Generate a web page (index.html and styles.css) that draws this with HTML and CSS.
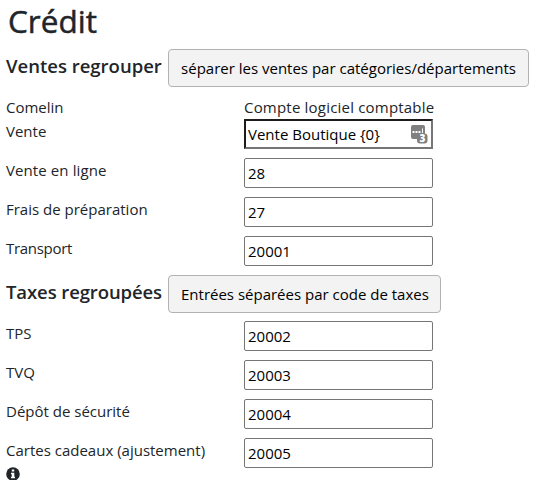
FILE: index.html
```
<!DOCTYPE html>
<html lang="fr">
<head>
    <meta charset="UTF-8">
    <meta name="viewport" content="width=device-width, initial-scale=1.0">
    <title>Crédit</title>
    <link rel="stylesheet" href="styles.css">
</head>
<body>

<div class="container">
    <h1>Crédit</h1>

    <div class="section-header">
        <h2 class="sales-title">Ventes regrouper</h2>
        <button type="button" class="btn-sales">séparer les ventes par catégories/départements</button>
    </div>

    <div class="row row-head">
        <span class="label">Comelin</span>
        <span class="head-account">Compte logiciel comptable</span>
    </div>
    <div class="row">
        <label class="label" for="vente">Vente</label>
        <div class="field">
            <input id="vente" class="active" type="text" value="Vente Boutique {0}">
            <svg class="field-icon" width="17" height="19" viewBox="0 0 17 19">
                <rect x="0" y="0" width="14" height="14" rx="2" fill="#808080"/>
                <path d="M1.5 6h2v2h-2zM4.5 6h2v2h-2zM7.5 6h2v2h-2zM11 3.5h1v4.5h-1z" fill="#fff"/>
                <rect x="6" y="8.5" width="10.5" height="10" rx="3" fill="#808080"/>
                <text x="11.5" y="17.2" text-anchor="middle" class="field-count">3</text>
            </svg>
        </div>
    </div>
    <div class="row">
        <label class="label label-online" for="enligne">Vente en ligne</label>
        <input id="enligne" type="text" value="28">
    </div>
    <div class="row">
        <label class="label" for="preparation">Frais de préparation</label>
        <input id="preparation" type="text" value="27">
    </div>
    <div class="row">
        <label class="label label-transport" for="transport">Transport</label>
        <input id="transport" type="text" value="20001">
    </div>

    <div class="section-header">
        <h2 class="taxes-title">Taxes regroupées</h2>
        <button type="button" class="btn-taxes">Entrées séparées par code de taxes</button>
    </div>

    <div class="row">
        <label class="label" for="tps">TPS</label>
        <input id="tps" type="text" value="20002">
    </div>
    <div class="row">
        <label class="label" for="tvq">TVQ</label>
        <input id="tvq" type="text" value="20003">
    </div>
    <div class="row">
        <label class="label" for="depot">Dépôt de sécurité</label>
        <input id="depot" type="text" value="20004">
    </div>
    <div class="row">
        <label class="label" for="cartes">
            Cartes cadeaux (ajustement)
            <svg class="info-icon" width="14" height="14" viewBox="0 0 14 14">
                <circle cx="7" cy="7" r="6.8" fill="#212529"/>
                <path d="M5.8 2.4h2.4v2.2H5.8zM5 5.7h3.3v4H9v1.5H5V9.7h.8V7.2H5z" fill="#fff"/>
            </svg>
        </label>
        <input id="cartes" type="text" value="20005">
    </div>
</div>

</body>
</html>
```

FILE: styles.css
```
* {
    box-sizing: border-box;
}
body {
    margin: 0;
    font-family: "Open Sans", "Noto Sans", sans-serif;
    font-size: 15px;
    line-height: 24px;
    color: #212529;
    background-color: #fff;
    overflow: hidden;
}
.container {
    height: 480px;
    padding-left: 6px;
}
h1 {
    margin: 0 0 7px 2px;
    font-size: 31.5px;
    font-weight: 500;
    line-height: 42px;
    -webkit-text-stroke: 0.5px #212529;
}
h2 {
    margin: 0;
    width: 162px;
    font-size: 18.5px;
    font-weight: 600;
    line-height: 34px;
    white-space: nowrap;
}
.taxes-title {
    letter-spacing: -0.1px;
}
.section-header {
    display: flex;
    height: 38px;
    margin-bottom: 8px;
}
button {
    height: 38px;
    padding: 0 12px;
    font-family: inherit;
    font-size: 15px;
    color: #000;
    white-space: nowrap;
    background-color: #f3f3f3;
    border: 1px solid #b2b2b2;
    border-radius: 4px;
}
.btn-sales {
    width: 361px;
}
.btn-taxes {
    width: 273px;
}
.row {
    display: flex;
    height: 39px;
}
.row-head {
    height: 24px;
}
.head-account {
    letter-spacing: 0.2px;
}
.label {
    width: 238px;
    padding-right: 30px;
    white-space: nowrap;
}
.label-online {
    letter-spacing: 0.1px;
}
.label-transport {
    letter-spacing: -0.3px;
}
input {
    width: 189px;
    height: 30px;
    padding: 1px 3px;
    font-family: inherit;
    font-size: 15px;
    color: #000;
    background-color: #fff;
    border: 1px solid #767676;
    border-radius: 2px;
}
input.active {
    padding: 0 2px;
    border: 2px solid #767676;
    border-top-color: #1c1c1c;
    border-left-color: #1c1c1c;
    border-radius: 0;
}
.field {
    position: relative;
    height: 30px;
}
.field input {
    display: block;
}
.field-icon {
    position: absolute;
    top: 6px;
    right: 5px;
}
.field-count {
    font-size: 10px;
    font-weight: 800;
    fill: #fff;
}
.info-icon {
    display: block;
    margin-top: 5px;
}
```
